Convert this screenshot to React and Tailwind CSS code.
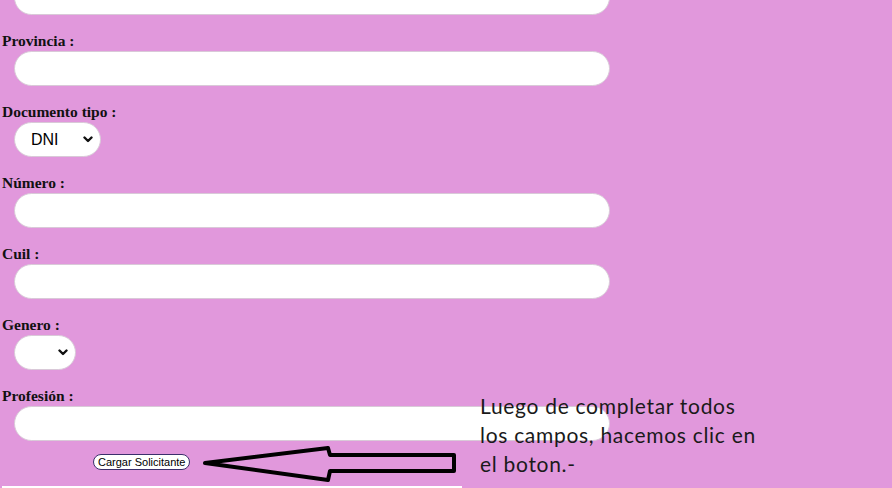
import React from "react";

const serif = { fontFamily: '"Liberation Serif", "Times New Roman", serif' };

function Chevron() {
  return (
    <svg width="10" height="7" viewBox="0 0 10 7" className="shrink-0">
      <path d="M1.5 1.5 L5 5 L8.5 1.5" fill="none" stroke="#111" strokeWidth="2.4" strokeLinecap="round" strokeLinejoin="round" />
    </svg>
  );
}

function Field({ label, children }) {
  return (
    <div className="flex flex-col mb-[15px]">
      <div className="h-[21px] leading-[21px] text-[15.5px] font-bold text-[#111] pl-[2px]" style={serif}>
        {label}
      </div>
      <div className="pl-[14px]">{children}</div>
    </div>
  );
}

function TextInput() {
  return <div className="w-[596px] h-[35px] rounded-full bg-white border border-[#d9c9d8]" />;
}

function Select({ width, value }) {
  return (
    <div
      className={`${width} h-[35px] rounded-full bg-white border border-[#d9c9d8] flex items-center justify-between pl-[16px] pr-[7px] text-[16px] text-black`}
      style={{ fontFamily: '"Liberation Sans", Arial, sans-serif' }}
    >
      <span>{value}</span>
      <Chevron />
    </div>
  );
}

export default function App() {
  return (
    <div className="relative w-[892px] h-[488px] overflow-hidden bg-[#e198dc]">
      <div className="flex flex-col -mt-[20px]">
        <div className="pl-[14px] mb-[15px]">
          <TextInput />
        </div>
        <Field label="Provincia :">
          <TextInput />
        </Field>
        <Field label="Documento tipo :">
          <Select width="w-[87px]" value="DNI" />
        </Field>
        <Field label="Número :">
          <TextInput />
        </Field>
        <Field label="Cuil :">
          <TextInput />
        </Field>
        <Field label="Genero :">
          <Select width="w-[62px]" value="" />
        </Field>
        <Field label="Profesión :">
          <TextInput />
        </Field>
        <div className="pl-[93px] -mt-[8px]">
          <button
            className="h-[16px] px-[4px] rounded-full bg-white border border-[#3b2f6b] text-[11px] leading-[14px] text-black"
            style={{ fontFamily: '"Liberation Sans", Arial, sans-serif' }}
          >
            Cargar Solicitante
          </button>
        </div>
      </div>

      <div className="absolute left-[2px] bottom-0 w-[460px] h-[2px] bg-white" />

      <div
        className="absolute left-[480px] top-[391px] text-[21px] leading-[29px] tracking-[0.7px] text-[#1a1a1a]"
        style={{ fontFamily: 'Lato, "Open Sans", sans-serif' }}
      >
        <div>Luego de completar todos</div>
        <div>los campos, hacemos clic en</div>
        <div>el boton.-</div>
      </div>

      <svg className="absolute left-[195px] top-[440px]" width="270" height="48" viewBox="0 0 270 48">
        <polygon
          points="10,23 133,8 135,15 259,15 259,31 135,31 133,40"
          fill="none"
          stroke="#000"
          strokeWidth="4"
          strokeLinejoin="round"
        />
      </svg>
    </div>
  );
}
